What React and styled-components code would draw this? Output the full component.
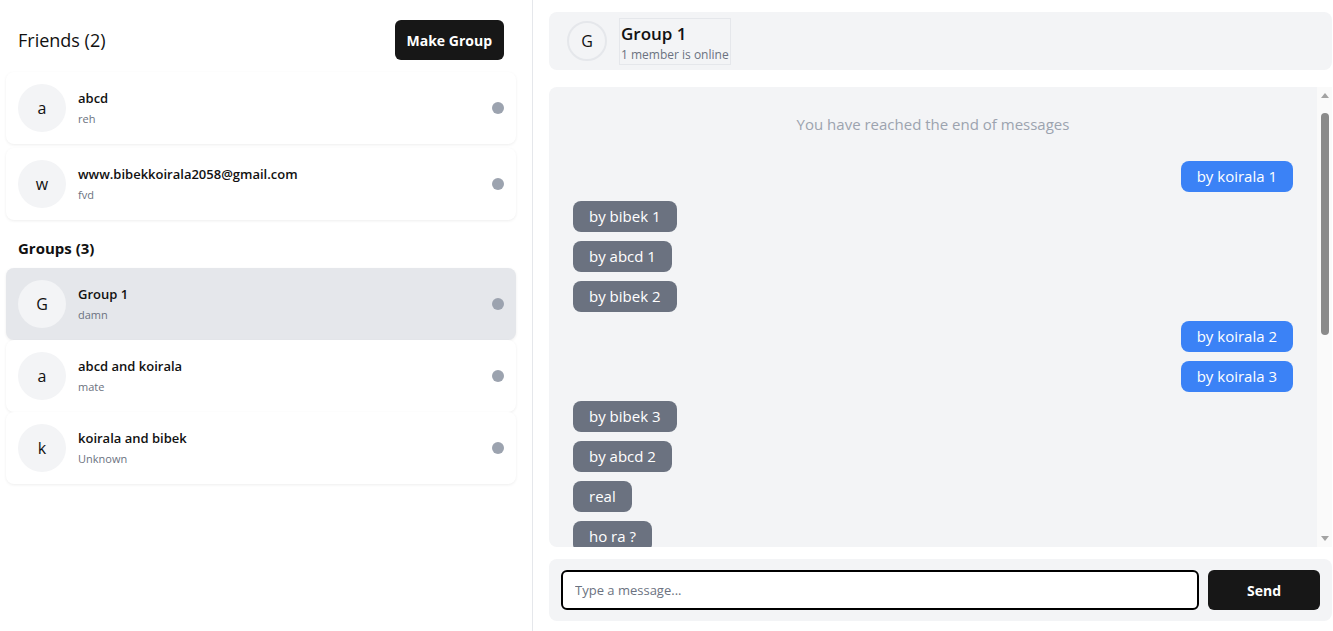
import React from 'react'
import styled, {createGlobalStyle} from 'styled-components'

const GlobalStyle = createGlobalStyle`
    * { box-sizing: border-box; }
    html, body { margin: 0; padding: 0; background: #ffffff; }
    body {
        font-family: "Open Sans", "Noto Sans", sans-serif;
        color: #111111;
    }
`;

const Page = styled.div`
    display: flex;
    height: 100vh;
    width: 100%;
    overflow: hidden;
`;

const Sidebar = styled.aside`
    width: 533px;
    flex-shrink: 0;
    border-right: 1px solid #e5e7eb;
    padding: 0 16px 0 6px;
    overflow-y: auto;
`;

const SidebarHeader = styled.div`
    display: flex;
    align-items: center;
    justify-content: space-between;
    padding: 20px 12px 0 12px;
    margin-bottom: 12px;
`;

const Title = styled.h2`
    margin: 0;
    font-size: 18px;
    font-weight: 500;
`;

const DarkButton = styled.button`
    height: 40px;
    padding: 0 ${p => p.$wide ? '39px' : '12px'};
    border: none;
    border-radius: 6px;
    background: #171717;
    color: #ffffff;
    font-family: inherit;
    font-size: 14px;
    font-weight: 700;
    cursor: pointer;
    flex-shrink: 0;
`;

const SectionTitle = styled.h3`
    margin: 0;
    padding: 14px 12px 10px;
    font-size: 15px;
    font-weight: 700;
    line-height: 20px;
`;

const Card = styled.div`
    display: flex;
    align-items: center;
    height: 72px;
    padding: 0 12px;
    border-radius: 8px;
    background: ${p => p.$active ? '#e5e7eb' : '#ffffff'};
    box-shadow: 0 1px 3px rgba(0, 0, 0, 0.07);
    margin-bottom: ${p => p.$spaced ? '4px' : '0'};
`;

const Avatar = styled.div`
    width: ${p => p.$size || 48}px;
    height: ${p => p.$size || 48}px;
    border-radius: 50%;
    background: #f3f4f6;
    border: ${p => p.$ring ? '2px solid #e5e7eb' : 'none'};
    display: flex;
    align-items: center;
    justify-content: center;
    font-size: 16px;
    color: #111111;
    flex-shrink: 0;
    margin-right: 12px;
`;

const Info = styled.div`
    flex: 1;
    min-width: 0;
    display: flex;
    flex-direction: column;
`;

const Name = styled.div`
    font-size: 13px;
    font-weight: 600;
    line-height: 18px;
    margin-bottom: 4px;
`;

const Sub = styled.div`
    font-size: 11px;
    color: #6b7280;
    line-height: 16px;
`;

const Dot = styled.span`
    width: 12px;
    height: 12px;
    border-radius: 50%;
    background: ${p => p.$online ? '#22c55e' : '#9ca3af'};
    flex-shrink: 0;
`;

const Chat = styled.main`
    flex: 1;
    min-width: 0;
    display: flex;
    flex-direction: column;
    padding: 12px 1px 10px 16px;
`;

const ChatHeader = styled.div`
    display: flex;
    align-items: center;
    height: 58px;
    padding: 0 18px;
    background: #f3f4f6;
    border-radius: 8px;
    flex-shrink: 0;
`;

const HeaderText = styled.div`
    border: 1px solid #e5e7eb;
    padding: 3px 1px 0 1px;
`;

const HeaderName = styled.div`
    font-size: 17px;
    font-weight: 600;
    line-height: 24px;
`;

const HeaderSub = styled.div`
    font-size: 12px;
    color: #6b7280;
    line-height: 18px;
`;

const MessagesPanel = styled.div`
    flex: 1;
    min-height: 0;
    margin: 17px 0 12px;
    display: flex;
    background: #f3f4f6;
    border-radius: 8px 0 0 8px;
    overflow: hidden;
`;

const MessageList = styled.div`
    flex: 1;
    min-width: 0;
    padding: 26px 24px 24px;
    overflow-y: auto;
    scrollbar-width: none;
    display: flex;
    flex-direction: column;
    gap: 9px;
    &::-webkit-scrollbar { display: none; }
`;

const ScrollRail = styled.div`
    width: 15px;
    flex-shrink: 0;
    background: #fafafa;
    display: flex;
    flex-direction: column;
    align-items: center;
`;

const RailArrow = styled.div`
    height: 17px;
    width: 100%;
    display: flex;
    align-items: center;
    justify-content: center;
    &::before {
        content: '';
        border-left: 4px solid transparent;
        border-right: 4px solid transparent;
        ${p => p.$down
            ? 'border-top: 5px solid #a3a3a3;'
            : 'border-bottom: 5px solid #a3a3a3;'}
    }
`;

const RailThumb = styled.div`
    width: 8px;
    height: ${p => p.$size}px;
    margin-top: 9px;
    border-radius: 4px;
    background: #8a8a8a;
`;

const RailSpace = styled.div`
    flex: 1;
`;

const EndNote = styled.div`
    text-align: center;
    color: #9ca3af;
    font-size: 15px;
    line-height: 22px;
    margin-bottom: 17px;
`;

const Bubble = styled.div`
    align-self: ${p => p.$mine ? 'flex-end' : 'flex-start'};
    background: ${p => p.$mine ? '#3b82f6' : '#6b7280'};
    color: #ffffff;
    font-size: 15px;
    line-height: 21px;
    padding: 5px 16px;
    border-radius: 8px;
    flex-shrink: 0;
`;

const Composer = styled.form`
    display: flex;
    align-items: center;
    gap: 9px;
    height: 62px;
    padding: 0 12px;
    background: #f3f4f6;
    border-radius: 8px;
    flex-shrink: 0;
`;

const Input = styled.input`
    flex: 1;
    height: 40px;
    border: 2px solid #000000;
    border-radius: 6px;
    padding: 0 12px;
    font-family: inherit;
    font-size: 13px;
    background: #ffffff;
    outline: none;
    &::placeholder { color: #6b7280; }
`;

const friends = [
    {name: 'abcd', sub: 'reh'},
    {name: 'www.bibekkoirala2058@gmail.com', sub: 'fvd'},
]

const groups = [
    {name: 'Group 1', sub: 'damn', active: true},
    {name: 'abcd and koirala', sub: 'mate'},
    {name: 'koirala and bibek', sub: 'Unknown'},
]

const messages = [
    {text: 'by koirala 1', mine: true},
    {text: 'by bibek 1'},
    {text: 'by abcd 1'},
    {text: 'by bibek 2'},
    {text: 'by koirala 2', mine: true},
    {text: 'by koirala 3', mine: true},
    {text: 'by bibek 3'},
    {text: 'by abcd 2'},
    {text: 'real'},
    {text: 'ho ra ?'},
    {text: 'ho', mine: true},
    {text: 'by koirala 4', mine: true},
    {text: 'by bibek 4'},
    {text: 'by abcd 3'},
    {text: 'ok', mine: true},
    {text: 'by bibek 5'},
    {text: 'by koirala 5', mine: true},
]

const Row = ({item, spaced}) => (
    <Card $active={item.active} $spaced={spaced}>
        <Avatar>{item.name[0]}</Avatar>
        <Info>
            <Name>{item.name}</Name>
            <Sub>{item.sub}</Sub>
        </Info>
        <Dot />
    </Card>
)

const App = () => {
    return (
        <Page>
            <GlobalStyle />
            <Sidebar>
                <SidebarHeader>
                    <Title>Friends ({friends.length})</Title>
                    <DarkButton>Make Group</DarkButton>
                </SidebarHeader>
                {friends.map(f => <Row key={f.name} item={f} spaced />)}
                <SectionTitle>Groups ({groups.length})</SectionTitle>
                {groups.map(g => <Row key={g.name} item={g} />)}
            </Sidebar>
            <Chat>
                <ChatHeader>
                    <Avatar $size={40} $ring>G</Avatar>
                    <HeaderText>
                        <HeaderName>Group 1</HeaderName>
                        <HeaderSub>1 member is online</HeaderSub>
                    </HeaderText>
                </ChatHeader>
                <MessagesPanel>
                    <MessageList>
                        <EndNote>You have reached the end of messages</EndNote>
                        {messages.map((m, i) => (
                            <Bubble key={i} $mine={m.mine}>{m.text}</Bubble>
                        ))}
                    </MessageList>
                    <ScrollRail>
                        <RailArrow />
                        <RailThumb $size={222} />
                        <RailSpace />
                        <RailArrow $down />
                    </ScrollRail>
                </MessagesPanel>
                <Composer onSubmit={e => e.preventDefault()}>
                    <Input placeholder="Type a message..." />
                    <DarkButton $wide type="submit">Send</DarkButton>
                </Composer>
            </Chat>
        </Page>
    )
}

export default App
